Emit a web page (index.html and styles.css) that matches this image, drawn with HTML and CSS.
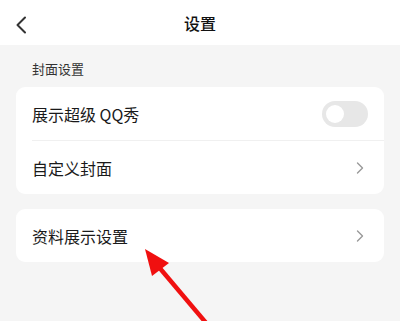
FILE: index.html
```html
<!DOCTYPE html>
<html lang="zh-CN">
<head>
    <meta charset="UTF-8">
    <meta name="viewport" content="width=device-width, initial-scale=1.0">
    <title>设置</title>
    <link rel="stylesheet" href="styles.css">
</head>
<body>

    <div class="header">
        <svg class="back" width="12" height="18" viewBox="0 0 12 18">
            <polyline points="10,1.5 2.5,9 10,16.5" fill="none" stroke="#333" stroke-width="2" stroke-linecap="round" stroke-linejoin="round"/>
        </svg>
        <span class="title">设置</span>
    </div>

    <div class="content">
        <div class="section-title">封面设置</div>

        <div class="card">
            <div class="row">
                <span class="row-label">展示超级 QQ秀</span>
                <div class="switch"><div class="knob"></div></div>
            </div>
            <div class="row">
                <span class="row-label">自定义封面</span>
                <svg class="chevron" width="8" height="12" viewBox="0 0 8 12">
                    <polyline points="1.5,1 6.5,6 1.5,11" fill="none" stroke="#999" stroke-width="1.4" stroke-linecap="round" stroke-linejoin="round"/>
                </svg>
            </div>
        </div>

        <div class="card">
            <div class="row">
                <span class="row-label">资料展示设置</span>
                <svg class="chevron" width="8" height="12" viewBox="0 0 8 12">
                    <polyline points="1.5,1 6.5,6 1.5,11" fill="none" stroke="#999" stroke-width="1.4" stroke-linecap="round" stroke-linejoin="round"/>
                </svg>
            </div>
        </div>
    </div>

    <!-- annotation arrow drawn over the page -->
    <svg class="pointer" width="400" height="321" viewBox="0 0 400 321">
        <line x1="207" y1="324" x2="158" y2="266" stroke="#f01010" stroke-width="4.5"/>
        <polygon points="145,249 152,276 169,263" fill="#f01010"/>
    </svg>

</body>
</html>
```

FILE: styles.css
```css
body {
    margin: 0;
    font-family: "Noto Sans CJK SC", "Noto Sans", sans-serif;
    background-color: #f5f5f5;
    color: #222222;
    width: 400px;
    height: 321px;
    overflow: hidden;
    position: relative;
}

.header {
    height: 45px;
    background-color: #ffffff;
    display: flex;
    align-items: center;
    justify-content: center;
    position: relative;
}

.header .back {
    position: absolute;
    left: 15px;
    top: 16px;
}

.title {
    font-size: 16px;
    font-weight: 500;
    color: #111111;
}

.content {
    padding: 0 16px;
}

.section-title {
    font-size: 13px;
    color: #333333;
    padding: 14px 0 0 16px;
    height: 28px;
}

.card {
    background-color: #ffffff;
    border-radius: 9px;
    margin-bottom: 15px;
    overflow: hidden;
}

.row {
    height: 53px;
    display: flex;
    align-items: center;
    justify-content: space-between;
    padding: 0 19px 0 16px;
}

.row + .row {
    border-top: 1px solid #f0f0f0;
    margin-left: 16px;
    padding-left: 0;
}

.row-label {
    font-size: 16px;
    color: #1a1a1a;
}

.chevron {
    margin-right: 1px;
}

.switch {
    width: 46px;
    height: 26px;
    border-radius: 13px;
    background-color: #e7e7e7;
    display: flex;
    align-items: center;
    padding-left: 4px;
    box-sizing: border-box;
    margin-right: -3px;
}

.knob {
    width: 18px;
    height: 18px;
    border-radius: 50%;
    background-color: #ffffff;
}

.pointer {
    position: absolute;
    left: 0;
    top: 0;
}
```
